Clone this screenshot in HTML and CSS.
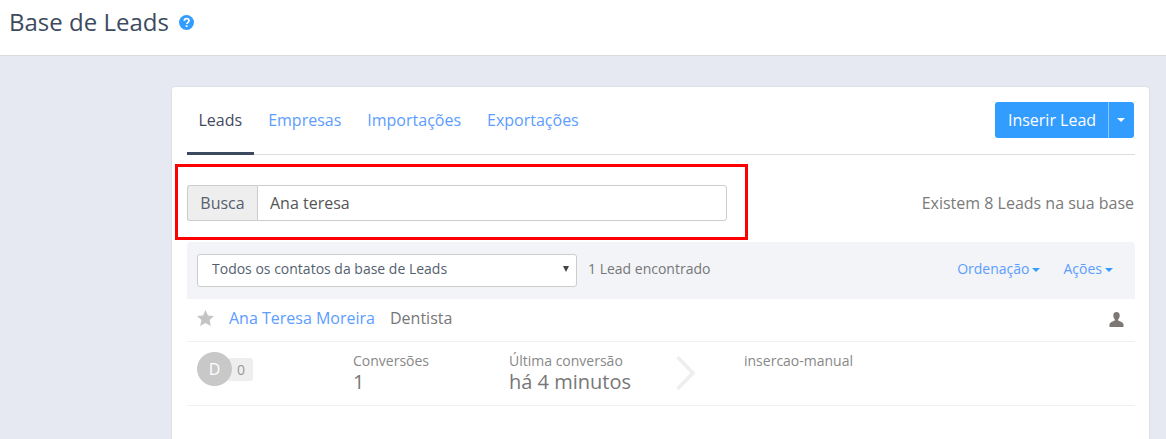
FILE: index.html
```html
<!DOCTYPE html>
<html lang="pt">
<head>
<meta charset="utf-8">
<title>Base de Leads</title>
<link rel="stylesheet" href="styles.css">
</head>
<body>
<header class="page-header">
  <h1 class="page-title">Base de Leads</h1>
  <svg class="help-icon" width="15" height="15" viewBox="0 0 15 15"><circle cx="7.5" cy="7.5" r="7.5" fill="#339cff"/><path d="M5.2 5.9c.1-1.4 1.1-2.2 2.4-2.2 1.4 0 2.4.8 2.4 2 0 1-.6 1.4-1.2 1.8-.5.4-.8.6-.8 1.2v.3" fill="none" stroke="#fff" stroke-width="1.7"/><rect x="6.7" y="10.2" width="1.8" height="1.8" fill="#fff"/></svg>
</header>
<main class="content">
  <section class="card">
    <div class="tabs-row">
      <nav class="tabs">
        <a class="tab active">Leads</a>
        <a class="tab">Empresas</a>
        <a class="tab">Importações</a>
        <a class="tab">Exportações</a>
      </nav>
      <div class="btn-group">
        <button class="btn btn-main">Inserir Lead</button>
        <button class="btn btn-caret"><span class="caret caret-white"></span></button>
      </div>
    </div>
    <div class="search-row">
      <div class="search-group">
        <span class="search-label">Busca</span>
        <input class="search-input" type="text" value="Ana teresa">
      </div>
      <span class="lead-total">Existem 8 Leads na sua base</span>
    </div>
    <div class="filter-bar">
      <div class="select-box">
        <span>Todos os contatos da base de Leads</span>
        <span class="select-arrow"></span>
      </div>
      <span class="found">1 Lead encontrado</span>
      <div class="filter-actions">
        <a class="filter-link">Ordenação<span class="caret caret-blue"></span></a>
        <a class="filter-link">Ações<span class="caret caret-blue"></span></a>
      </div>
    </div>
    <div class="lead-head">
      <svg class="star" width="17" height="16" viewBox="0 0 17 16"><path d="M8.5 0l2.5 5.4 6 .7-4.400 4 1.200 5.900-5.300-3-5.300 3 1.200-5.900L0 6.100l6-.7z" fill="#c4c4c4"/></svg>
      <a class="lead-name">Ana Teresa Moreira</a>
      <span class="lead-job">Dentista</span>
      <svg class="person" width="15" height="15" viewBox="0 0 15 15"><path d="M7.500 0c2 0 3.200 1.400 3.200 3.500 0 1.500-.6 3-1.500 3.800v1.300c1 .6 5.300 1.700 5.300 4V15H.5v-2.400c0-2.300 4.300-3.400 5.300-4V7.300C4.900 6.500 4.300 5 4.300 3.500 4.300 1.400 5.500 0 7.500 0z" fill="#7d7873"/></svg>
    </div>
    <div class="lead-body">
      <div class="score">
        <span class="score-count">0</span>
        <span class="avatar">D</span>
      </div>
      <div class="stat stat-conv">
        <span class="stat-label">Conversões</span>
        <span class="stat-value">1</span>
      </div>
      <div class="stat stat-last">
        <span class="stat-label">Última conversão</span>
        <span class="stat-value">há 4 minutos</span>
      </div>
      <svg class="chevron" width="22" height="36" viewBox="0 0 22 36"><path d="M2.500 2l15.500 16L2.500 34" fill="none" stroke="#eeeeee" stroke-width="3.500"/></svg>
      <span class="stat-label source">insercao-manual</span>
    </div>
  </section>
</main>
<div class="highlight"></div>
</body>
</html>
```
FILE: styles.css
```css
* { box-sizing: border-box; }
html, body { height: 100%; }
body {
  margin: 0;
  background: #e6e9f2;
  font-family: "Open Sans", sans-serif;
  color: #555;
  overflow: hidden;
  position: relative;
}
.page-header {
  height: 56px;
  background: #fff;
  border-bottom: 1px solid #dcdcdc;
  display: flex;
  align-items: flex-start;
  padding: 5px 0 0 9px;
}
.page-title {
  margin: 0;
  font-size: 24px;
  line-height: 33px;
  font-weight: 400;
  color: #3c4a60;
}
.help-icon { margin: 10px 0 0 10px; }
.content { padding: 30px 16px 0 171px; height: 383px; overflow: hidden; }
.card {
  background: #fff;
  border: 1px solid #dde0e8;
  border-radius: 4px;
  padding: 15px 14px 0 15px;
  height: 400px;
}
.tabs-row {
  display: flex;
  justify-content: space-between;
  align-items: flex-start;
  height: 53px;
  border-bottom: 1px solid #ddd;
}
.tabs { display: flex; gap: 3px; }
.tab {
  padding: 0 11.5px;
  height: 53px;
  line-height: 37px;
  font-size: 16px;
  color: #5c9dff;
}
.tab.active {
  color: #444a5e;
  border-bottom: 3px solid #3c4a60;
}
.btn-group { display: flex; height: 36px; margin-right: 1px; }
.btn {
  border: 0;
  background: #339cff;
  color: #fff;
  font-family: inherit;
  font-size: 16px;
  padding: 0;
}
.btn-main {
  width: 114px;
  padding-left: 1px;
  border-radius: 3px 0 0 3px;
  border-right: 1px solid #8cc7ff;
}
.btn-caret {
  width: 25px;
  padding-right: 2px;
  border-radius: 0 3px 3px 0;
  display: flex;
  align-items: center;
  justify-content: center;
}
.caret {
  display: inline-block;
  width: 0;
  height: 0;
  border-left: 4px solid transparent;
  border-right: 4px solid transparent;
  border-top: 4px solid currentColor;
}
.caret-white { color: #fff; }
.caret-blue { color: #339cff; margin-left: 3px; vertical-align: 2px; }
.search-row {
  display: flex;
  justify-content: space-between;
  align-items: center;
  height: 36px;
  margin-top: 30px;
  padding-right: 1px;
}
.search-group {
  display: flex;
  width: 540px;
  height: 36px;
}
.search-label {
  width: 70px;
  background: #eee;
  border: 1px solid #ccc;
  border-right: 0;
  border-radius: 3px 0 0 3px;
  font-size: 16px;
  line-height: 34px;
  text-align: center;
  color: #555f70;
}
.search-input {
  flex: 1;
  min-width: 0;
  border: 1px solid #ccc;
  border-radius: 0 3px 3px 0;
  padding: 0 12px;
  font-family: inherit;
  font-size: 16px;
  color: #555;
  background: #fff;
}
.lead-total { font-size: 16px; color: #7a7a7a; }
.filter-bar {
  display: flex;
  align-items: center;
  height: 57px;
  margin-top: 21px;
  padding: 0 22px 0 10px;
  background: #f2f4f8;
  border-radius: 4px 4px 0 0;
}
.select-box {
  width: 380px;
  height: 33px;
  display: flex;
  justify-content: space-between;
  align-items: center;
  padding: 0 7px 0 14px;
  background: #fff;
  border: 1px solid #ccc;
  border-radius: 3px;
  font-size: 14px;
  color: #555f70;
}
.select-box span:first-child { margin-bottom: 5px; }
.select-arrow {
  width: 0;
  height: 0;
  margin-bottom: 3px;
  border-left: 3px solid transparent;
  border-right: 3px solid transparent;
  border-top: 6px solid #444;
}
.found { margin: 0 0 5px 11px; font-size: 14px; color: #777; }
.filter-actions { margin: 0 0 5px auto; display: flex; gap: 23px; }
.filter-link { font-size: 14px; color: #5c9dff; }
.lead-head {
  display: flex;
  align-items: center;
  height: 43px;
  padding: 0 11px 4px 10px;
  border-bottom: 1px solid #f0f0f0;
}
.star { margin-right: 15px; }
.lead-name { font-size: 16px; color: #5c9dff; margin-right: 15px; }
.lead-job { font-size: 16px; color: #777; }
.person { margin-left: auto; margin-top: 2px; }
.lead-body {
  position: relative;
  display: flex;
  align-items: flex-start;
  height: 64px;
  padding: 10px 0 0 10px;
  border-bottom: 1px solid #f0f0f0;
}
.score { position: relative; width: 156px; height: 34px; }
.avatar {
  position: absolute;
  left: 0;
  top: 0;
  width: 35px;
  height: 34px;
  border-radius: 50%;
  background: #c8c8c8;
  color: #fff;
  font-size: 16px;
  line-height: 34px;
  text-align: center;
}
.score-count {
  position: absolute;
  left: 30px;
  top: 6px;
  width: 26px;
  height: 23px;
  padding-left: 10px;
  background: #eee;
  border-radius: 3px;
  font-size: 14px;
  line-height: 23px;
  color: #999;
}
.stat { display: flex; flex-direction: column; }
.stat-conv { width: 156px; }
.stat-last { width: 166px; }
.stat-label { font-size: 14px; line-height: 18px; color: #888; }
.stat-value { font-size: 20px; line-height: 24px; color: #777; }
.chevron { margin: 3px 0 0 0; }
.source { margin-left: 47px; }
.highlight {
  position: absolute;
  left: 175px;
  top: 164px;
  width: 573px;
  height: 76px;
  border: 3px solid #f00;
}
```
